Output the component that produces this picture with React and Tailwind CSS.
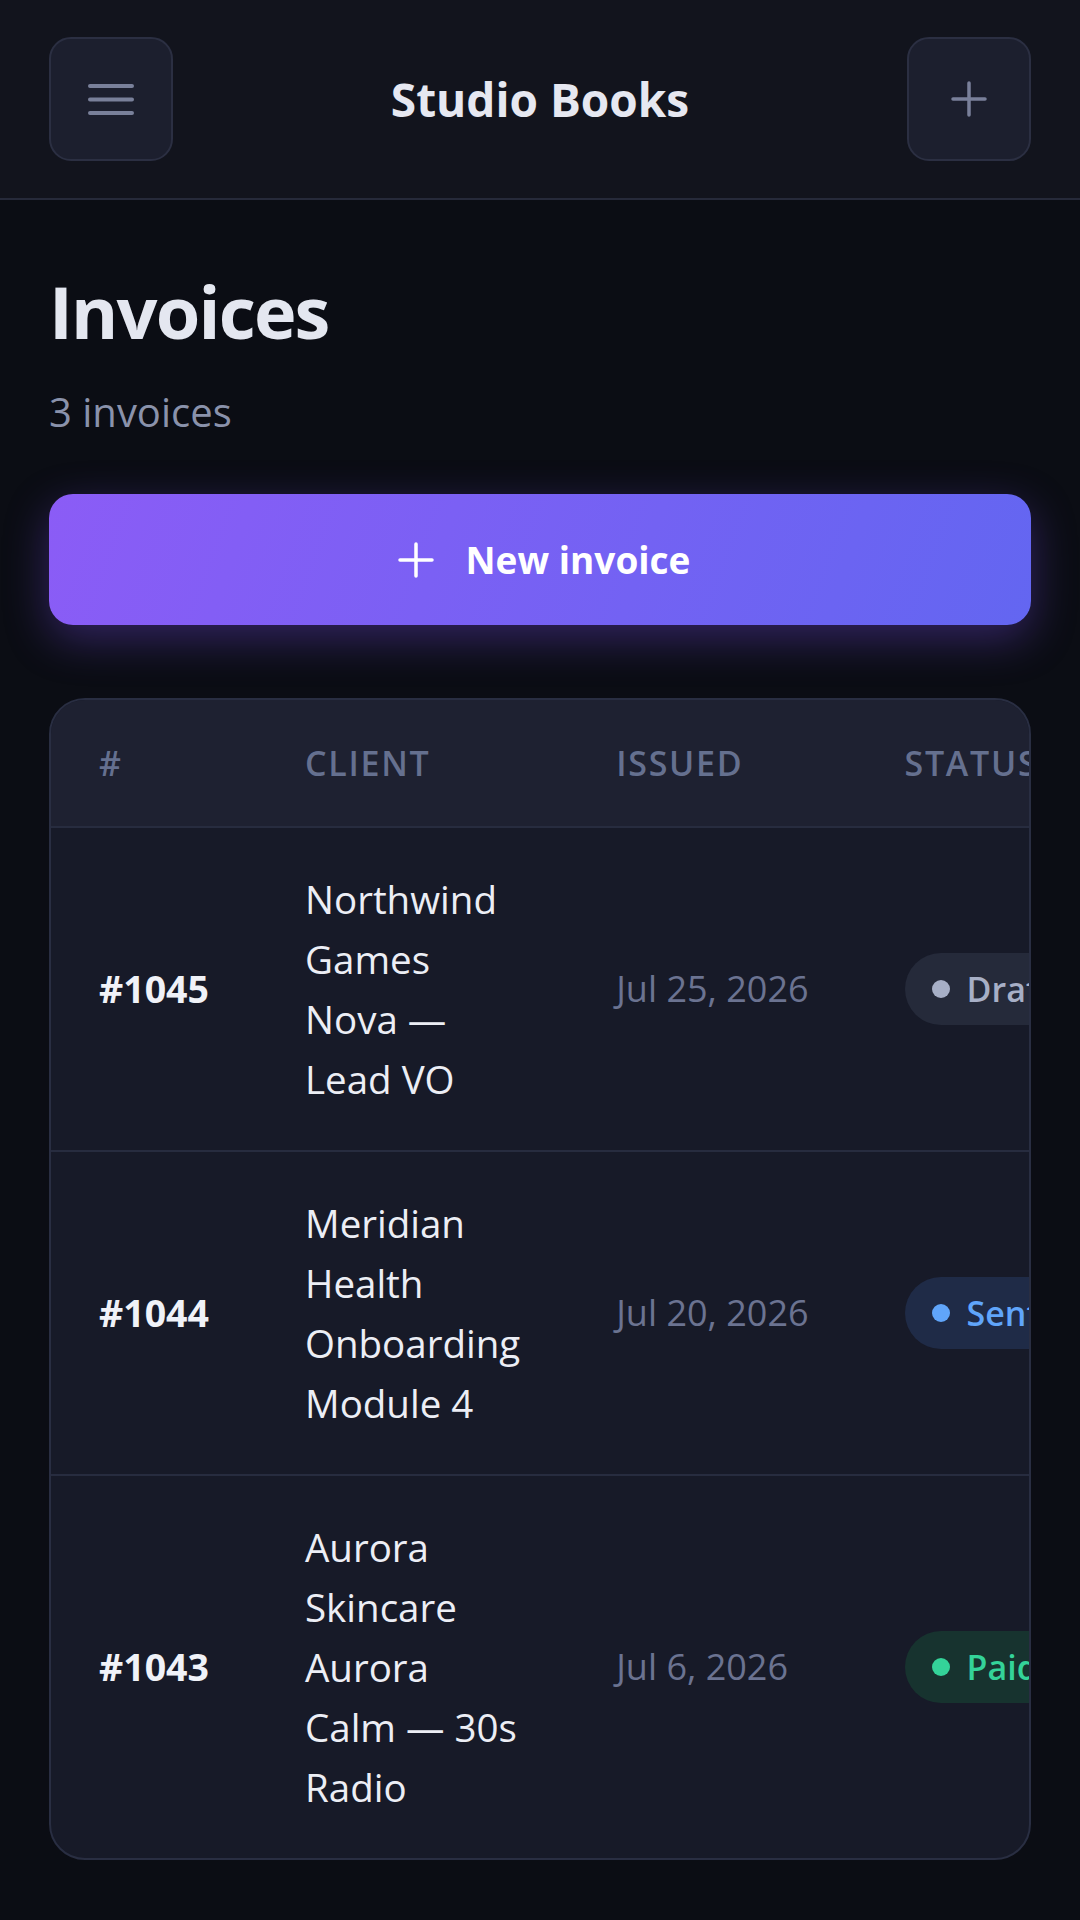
const INVOICES = [
  { id: '#1045', client: 'Northwind Games', project: 'Nova — Lead VO', issued: 'Jul 25, 2026', status: 'Draft', amount: '$1,850.00' },
  { id: '#1044', client: 'Meridian Health', project: 'Onboarding Module 4', issued: 'Jul 20, 2026', status: 'Sent', amount: '$2,400.00' },
  { id: '#1043', client: 'Aurora Skincare', project: 'Aurora Calm — 30s Radio', issued: 'Jul 6, 2026', status: 'Paid', amount: '$950.00' },
]

const BADGE = {
  Draft: { wrap: 'bg-[#252a3a] text-[#a7afc6]', dot: 'bg-[#a7afc6]' },
  Sent: { wrap: 'bg-[#1f2b47] text-[#60a5fa]', dot: 'bg-[#60a5fa]' },
  Paid: { wrap: 'bg-[#17332f] text-[#34d399]', dot: 'bg-[#34d399]' },
}

function PlusIcon({ className }) {
  return (
    <svg viewBox="0 0 36 36" className={className} fill="none" stroke="currentColor" strokeWidth="3.5" strokeLinecap="round">
      <path d="M18 2v32M2 18h32" />
    </svg>
  )
}

export default function App() {
  return (
    <div className="min-h-screen bg-[#0b0d14] font-['Open_Sans','Noto_Sans',sans-serif]">
      <header className="flex items-center justify-between px-[49px] py-[37px] bg-[#12141d] border-b-2 border-[#262a3a]">
        <button className="w-[124px] h-[124px] rounded-[22px] bg-[#1c1f2e] border-2 border-[#2b2f42] flex items-center justify-center">
          <svg viewBox="0 0 46 31" className="w-[46px] h-[31px]" fill="none" stroke="#79809a" strokeWidth="4" strokeLinecap="round">
            <path d="M2 2h42M2 15.5h42M2 29h42" />
          </svg>
        </button>
        <h1 className="text-[46px] leading-[60px] font-bold text-[#e6e8f1]">Studio Books</h1>
        <button className="w-[124px] h-[124px] rounded-[22px] bg-[#1c1f2e] border-2 border-[#2b2f42] flex items-center justify-center text-[#79809a]">
          <PlusIcon className="w-[36px] h-[36px]" />
        </button>
      </header>

      <main className="px-[49px] pt-[71px] pb-[60px]">
        <h2 className="text-[72px] leading-[80px] font-bold tracking-tight text-[#e4e7f0]">Invoices</h2>
        <p className="mt-[33px] text-[40px] leading-[56px] text-[#8a92ab]">3 invoices</p>

        <button className="mt-[54px] w-full h-[131px] pl-[8px] rounded-[24px] bg-[linear-gradient(110deg,#8b5cf6,#6366f1)] shadow-[0_14px_44px_rgba(124,77,240,0.35)] flex items-center justify-center gap-[32px] text-white">
          <PlusIcon className="w-[36px] h-[36px]" />
          <span className="text-[37px] leading-[52px] font-bold">New invoice</span>
        </button>

        {/* invoice table, overflows to the right */}
        <div className="mt-[73px] rounded-[36px] border-2 border-[#292e42] bg-[#171a28] overflow-hidden">
          <table className="w-full border-collapse text-left">
            <thead className="bg-[#1e2131]">
              <tr className="border-b-2 border-[#272c3f]">
                {['#', 'Client', 'Issued', 'Status', 'Amount'].map((h) => (
                  <th key={h} className="px-[48px] py-[39px] text-[34px] leading-[48px] font-semibold uppercase tracking-wider text-[#65708f] whitespace-nowrap">
                    {h}
                  </th>
                ))}
              </tr>
            </thead>
            <tbody>
              {INVOICES.map((inv, i) => (
                <tr key={inv.id} className={i < INVOICES.length - 1 ? 'border-b-2 border-[#272c3f]' : ''}>
                  <td className="px-[48px] py-[41px] align-middle text-[37.5px] leading-[60px] font-bold text-[#f0f2f8] whitespace-nowrap">{inv.id}</td>
                  <td className="px-[48px] py-[41px] align-middle text-[38.5px] leading-[60px] text-[#eceef5]">
                    <div>{inv.client}</div>
                    <div>{inv.project}</div>
                  </td>
                  <td className="px-[48px] py-[41px] align-middle text-[36px] leading-[60px] text-[#6b7391] whitespace-nowrap">{inv.issued}</td>
                  <td className="px-[48px] py-[41px] align-middle whitespace-nowrap">
                    <span className={`inline-flex items-center gap-[17px] rounded-full px-[27px] py-[12px] text-[34px] leading-[48px] font-semibold ${BADGE[inv.status].wrap}`}>
                      <span className={`w-[18px] h-[18px] rounded-full ${BADGE[inv.status].dot}`} />
                      {inv.status}
                    </span>
                  </td>
                  <td className="px-[48px] py-[41px] align-middle text-[38px] leading-[60px] font-semibold text-[#eceef5] whitespace-nowrap">{inv.amount}</td>
                </tr>
              ))}
            </tbody>
          </table>
        </div>
      </main>
    </div>
  )
}
